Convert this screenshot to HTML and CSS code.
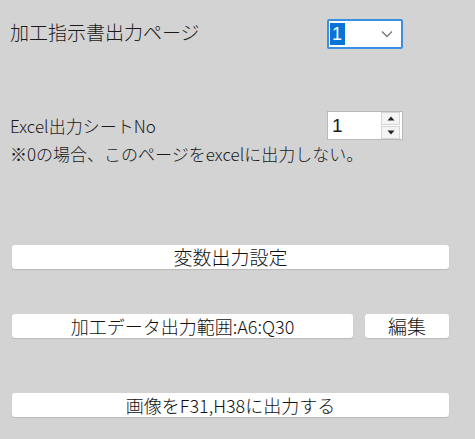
FILE: index.html
```html
<!DOCTYPE html>
<html lang="ja">
<head>
<meta charset="utf-8">
<link rel="stylesheet" href="styles.css">
</head>
<body>
<div class="page">
  <div class="row row-title">
    <div class="label label-title">加工指示書出力ページ</div>
    <div class="select">
      <span class="sel-value">1</span>
      <svg class="chev" width="12" height="8" viewBox="0 0 12 8"><path d="M1 1.5 L6 6.5 L11 1.5" fill="none" stroke="#7a7a7a" stroke-width="1.4"/></svg>
    </div>
  </div>

  <div class="row row-excel">
    <div class="label label-excel">Excel出力シートNo</div>
    <div class="spin">
      <span class="spin-value">1</span>
      <div class="spin-btns">
        <div class="spin-btn"><svg width="8" height="5" viewBox="0 0 8 5"><path d="M0.5 4.5 L4 0.5 L7.5 4.5 Z" fill="#222"/></svg></div>
        <div class="spin-btn"><svg width="8" height="5" viewBox="0 0 8 5"><path d="M0.5 0.5 L4 4.5 L7.5 0.5 Z" fill="#222"/></svg></div>
      </div>
    </div>
  </div>
  <div class="note">※0の場合、このページをexcelに出力しない。</div>

  <div class="btn btn-full btn-vars">変数出力設定</div>

  <div class="btn-row">
    <div class="btn btn-range">加工データ出力範囲:A6:Q30</div>
    <div class="btn btn-edit">編集</div>
  </div>

  <div class="btn btn-full btn-image">画像をF31,H38に出力する</div>
</div>
</body>
</html>
```

FILE: styles.css
```css
html, body {
  margin: 0;
  padding: 0;
  background: #d3d3d3;
}
body {
  width: 475px;
  height: 439px;
  overflow: hidden;
  font-family: "Noto Sans CJK JP", "Noto Sans", sans-serif;
  font-weight: 300;
  color: #1a1a1a;
}
.page {
  padding: 19px 0 0 0;
}
.row {
  display: flex;
  align-items: center;
}
.label {
  width: 317px;
  padding-left: 10px;
  box-sizing: content-box;
  white-space: nowrap;
}
.label-title {
  font-size: 19px;
  line-height: 30px;
  margin-top: -4px;
}
.select {
  width: 76px;
  height: 30px;
  box-sizing: border-box;
  border: 2px solid #3b8ee0;
  border-radius: 2px;
  background: #fff;
  display: flex;
  align-items: center;
  justify-content: space-between;
  padding: 0 8px 0 1px;
}
.sel-value {
  background: #0a74d6;
  color: #fff;
  font-family: "Liberation Sans", sans-serif;
  font-weight: 400;
  font-size: 18px;
  line-height: 22px;
  padding: 0 3px 0 2px;
}
.chev {
  display: block;
}
.row-excel {
  margin-top: 62px;
}
.label-excel {
  font-size: 17px;
  line-height: 29px;
}
.spin {
  width: 76px;
  height: 29px;
  box-sizing: border-box;
  border: 1px solid #b9b9b9;
  background: #fff;
  display: flex;
  align-items: center;
  justify-content: space-between;
  padding: 0 2px 0 4px;
}
.spin-value {
  font-family: "Liberation Sans", sans-serif;
  font-weight: 400;
  font-size: 19px;
  line-height: 24px;
}
.spin-btns {
  display: flex;
  flex-direction: column;
  gap: 1px;
}
.spin-btn {
  width: 17px;
  height: 11px;
  border: 1px solid #d6d6d6;
  background: #f4f4f4;
  display: flex;
  align-items: center;
  justify-content: center;
}
.spin-btn svg {
  display: block;
}
.note {
  padding-left: 10px;
  font-size: 17px;
  line-height: 24px;
  margin-top: 2px;
  white-space: nowrap;
}
.btn {
  height: 24px;
  box-sizing: border-box;
  background: #fff;
  border-radius: 3px;
  box-shadow: 0 1px 1px rgba(0,0,0,0.12);
  text-align: center;
  font-size: 19px;
  line-height: 24px;
  white-space: nowrap;
  color: #111;
}
.btn-full {
  margin-left: 12px;
  width: 437px;
}
.btn-vars {
  margin-top: 79px;
}
.btn-row {
  display: flex;
  gap: 12px;
  margin-left: 12px;
  margin-top: 45px;
}
.btn-range {
  width: 341px;
  font-size: 18px;
}
.btn-edit {
  width: 84px;
}
.btn-image {
  margin-top: 55px;
  font-size: 18px;
}
```
